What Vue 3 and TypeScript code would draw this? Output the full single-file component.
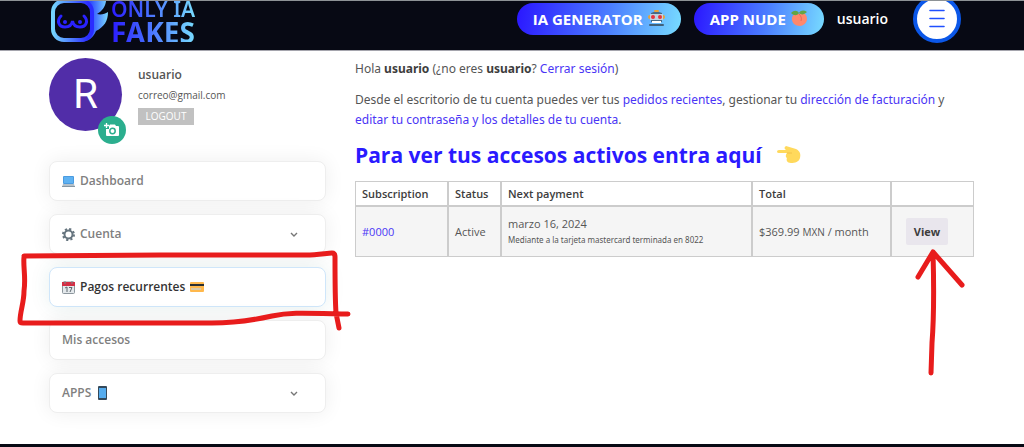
<script setup lang="ts">
interface MenuItem {
  label: string
  icon?: string
  trailing?: string
  expandable?: boolean
  active?: boolean
}

interface Subscription {
  id: string
  status: string
  next: string
  method: string
  amount: string
  currency: string
  period: string
}

const menu: MenuItem[] = [
  { label: 'Dashboard', icon: 'laptop' },
  { label: 'Cuenta', icon: 'gear', expandable: true },
  { label: 'Pagos recurrentes', icon: 'calendar', trailing: 'card', active: true },
  { label: 'Mis accesos' },
  { label: 'APPS', trailing: 'phone', expandable: true },
]

const subscriptions: Subscription[] = [
  {
    id: '#0000',
    status: 'Active',
    next: 'marzo 16, 2024',
    method: 'Mediante a la tarjeta mastercard terminada en 8022',
    amount: '$369.99',
    currency: 'MXN',
    period: '/ month',
  },
]
</script>

<template>
  <div class="page">
    <header class="topbar">
      <a class="brand" href="#">
        <svg class="brand-mark" width="60" height="56" viewBox="0 0 60 56" aria-hidden="true">
          <defs>
            <linearGradient id="markRing" x1="0" x2="1" y1="0" y2="0">
              <stop offset="0" stop-color="#74d4ff" />
              <stop offset="0.9" stop-color="#2a2cff" />
            </linearGradient>
            <linearGradient id="markFlame" x1="0" x2="1" y1="0" y2="0">
              <stop offset="0" stop-color="#2a22ff" />
              <stop offset="0.4" stop-color="#3050ff" />
              <stop offset="1" stop-color="#7ad9ff" />
            </linearGradient>
          </defs>
          <path d="M32 8 L58 6 C59 15 56 21 49 25 C53 26 57 25 60 23 C60 32 56 38 48 42 C45 49 41 52 34 53 Z" fill="url(#markFlame)" />
          <rect x="5" y="12" width="39" height="39" rx="11" fill="#070914" stroke="url(#markRing)" stroke-width="4" />
          <path d="M13 27 C8 32 11 38 17 38 C22 38 24 35 24.500 32 C25 35 27 38 32 38 C38 38 41 32 36 27" fill="none" stroke="#2a22ff" stroke-width="3" stroke-linecap="round" />
          <circle cx="17" cy="33" r="2" fill="#2a22ff" />
          <circle cx="32" cy="33" r="2" fill="#2a22ff" />
        </svg>
        <span class="brand-text">
          <span class="brand-top">ONLY IA</span>
          <span class="brand-bottom">FAKES</span>
        </span>
      </a>
      <nav class="topnav">
        <a class="pill" href="#">
          IA GENERATOR
          <svg width="17" height="17" viewBox="0 0 17 17" aria-hidden="true">
            <rect x="0" y="5" width="17" height="4" rx="2" fill="#e8a23a" />
            <path d="M3 3 Q8 0 14 3 V12 H3Z" fill="#486b86" />
            <rect x="6" y="0" width="5" height="2" rx="1" fill="#e8a23a" />
            <rect x="2" y="4" width="13" height="6" fill="#bed2df" />
            <circle cx="5" cy="7" r="2" fill="#e8333c" />
            <circle cx="12" cy="7" r="2" fill="#e8333c" />
            <rect x="4" y="11" width="9" height="2" fill="#fff" />
            <rect x="1" y="14" width="15" height="2" rx="1" fill="#40617b" />
          </svg>
        </a>
        <a class="pill" href="#">
          APP NUDE
          <svg width="17" height="17" viewBox="0 0 17 17" aria-hidden="true">
            <path d="M8 4 C13 1 16 5 16 9 C16 13 12 16 9 16 C4 16 1 13 1 9 C1 5 4 3 8 4Z" fill="#ff886c" />
            <path d="M8 4 C10 6 11 8 10 11" fill="none" stroke="#e7685a" />
            <path d="M0 3 C3 0 6 0 8 3 C10 0 13 0 16 2 C13 5 10 5 8 3 C6 6 3 6 0 3Z" fill="#63a545" />
          </svg>
        </a>
        <a class="user" href="#">usuario</a>
        <button class="burger" type="button" aria-label="Menú">
          <svg width="16" height="19" viewBox="0 0 16 19" aria-hidden="true">
            <path d="M1 1.5H15M1 9.5H15M1 17.5H15" stroke="#1f4fff" stroke-width="1.6" stroke-linecap="round" />
          </svg>
        </button>
      </nav>
    </header>

    <div class="content">
      <aside class="sidebar">
        <div class="profile">
          <div class="avatar">
            <span>R</span>
            <button class="camera" type="button" aria-label="Cambiar foto">
              <svg width="16" height="14" viewBox="0 0 16 14" aria-hidden="true">
                <path d="M5 3 L6 1.500H11L12 3H14Q15 3 15 4V12Q15 13 14 13H3Q2 13 2 12V6H5Z" fill="#fff" />
                <circle cx="8.500" cy="8" r="2.700" fill="#fff" stroke="#2bae8e" stroke-width="1.500" />
                <path d="M2.500 0V5M0 2.500H5" stroke="#fff" stroke-width="1.300" />
              </svg>
            </button>
          </div>
          <div class="identity">
            <strong>usuario</strong>
            <span class="mail">correo@gmail.com</span>
            <button class="logout" type="button">LOGOUT</button>
          </div>
        </div>

        <ul class="menu">
          <li v-for="item in menu" :key="item.label">
            <a class="menu-item" :class="{ active: item.active }" href="#">
              <svg v-if="item.icon === 'laptop'" width="13" height="13" viewBox="0 0 13 13" aria-hidden="true">
                <rect x="1" y="1" width="11" height="8" rx="1" fill="#4a9be0" />
                <rect x="2" y="2" width="9" height="6" fill="#5fb2f2" />
                <path d="M1 9H12L13 12H0Z" fill="#b4c0c9" />
                <path d="M0 11H13V12H0Z" fill="#8797a3" />
              </svg>
              <svg v-else-if="item.icon === 'gear'" width="13" height="13" viewBox="0 0 13 13" aria-hidden="true">
                <circle cx="6.500" cy="6.500" r="5.500" fill="none" stroke="#66757f" stroke-width="2" stroke-dasharray="2.160 2.160" />
                <circle cx="6.500" cy="6.500" r="4" fill="none" stroke="#66757f" stroke-width="2" />
              </svg>
              <svg v-else-if="item.icon === 'calendar'" width="13" height="13" viewBox="0 0 13 13" aria-hidden="true">
                <rect x="0.500" y="1" width="12" height="11.500" rx="1" fill="#e3e8eb" stroke="#8c969d" />
                <path d="M0 1H13V5H0Z" fill="#d32e44" />
                <path d="M3 0V3M10 0V3" stroke="#7e858b" />
                <path d="M3 7L5 6V11M7 6.500H10L8 11" fill="none" stroke="#5d676e" />
              </svg>
              <span>{{ item.label }}</span>
              <svg v-if="item.trailing === 'card'" width="14" height="10" viewBox="0 0 14 10" aria-hidden="true">
                <rect width="14" height="10" rx="1" fill="#ffb84c" />
                <rect y="2" width="14" height="2" fill="#292f33" />
                <rect x="1" y="6" width="10" height="2" fill="#d8c8a7" />
              </svg>
              <svg v-else-if="item.trailing === 'phone'" class="phone" width="9" height="14" viewBox="0 0 9 14" aria-hidden="true">
                <rect width="9" height="14" rx="1" fill="#34495a" />
                <rect x="1" y="2" width="7" height="10" fill="#55acee" />
              </svg>
              <svg v-if="item.expandable" class="chevron" width="8" height="5" viewBox="0 0 8 5" aria-hidden="true">
                <path d="M1 1L4 4L7 1" fill="none" stroke="#777" stroke-width="1.400" />
              </svg>
            </a>
            <svg v-if="item.active" class="mark-box" width="334" height="84" viewBox="0 0 334 84" aria-hidden="true">
              <path d="M7 8 C6 18 9 28 7 42 C7 54 3 62 3 72 Q3 74 6 74 L195 74 C221 74 237 71 255 67 C273 63 287 64 331 65 M7 7 L144 6 H289 C301 6 310 4 315 4 Q318 4 318 8 C318 28 318 50 319 64 L322 79" />
            </svg>
          </li>
        </ul>
      </aside>

      <main class="main">
        <p>Hola <strong>usuario</strong> (¿no eres <strong>usuario</strong>? <a href="#">Cerrar sesión</a>)</p>
        <p>
          Desde el escritorio de tu cuenta puedes ver tus <a href="#">pedidos recientes</a>, gestionar tu
          <a href="#">dirección de facturación</a> y <a href="#">editar tu contraseña y los detalles de tu cuenta</a>.
        </p>
        <h2>
          <a href="#">Para ver tus accesos activos entra aquí</a>
          <svg width="24" height="18" viewBox="0 0 24 18" aria-hidden="true">
            <path d="M2 4 H9 C7 3 7 1 9 0 L19 3 C23 5 24 8 23 12 C22 16 18 17 14 17 C10 17 9 14 10 12 C8 11 9 8 10 7 H2 Q0 7 0 5.500 Q0 4 2 4Z" fill="#ffd95c" />
            <path d="M10 7H15" stroke="#f0bd47" stroke-width="0.800" />
          </svg>
        </h2>

        <table>
          <colgroup>
            <col class="c-id"><col class="c-status"><col class="c-next"><col class="c-total"><col class="c-action">
          </colgroup>
          <thead>
            <tr>
              <th scope="col">Subscription</th>
              <th scope="col">Status</th>
              <th scope="col">Next payment</th>
              <th scope="col">Total</th>
              <td></td>
            </tr>
          </thead>
          <tbody>
            <tr v-for="s in subscriptions" :key="s.id">
              <td><a href="#">{{ s.id }}</a></td>
              <td>{{ s.status }}</td>
              <td>{{ s.next }}<small>{{ s.method }}</small></td>
              <td>{{ s.amount }} <span class="currency">{{ s.currency }}</span> {{ s.period }}</td>
              <td class="action">
                <div class="view-wrap">
                  <button class="view" type="button">View</button>
                  <svg class="mark-arrow" width="54" height="132" viewBox="0 0 54 132" aria-hidden="true">
                    <path d="M6 30 L21 5 L50 38 M21 5 C22 40 22 70 20 96 L19 126" />
                  </svg>
                </div>
              </td>
            </tr>
          </tbody>
        </table>
      </main>
    </div>
    <footer class="footer"></footer>
  </div>
</template>

<style>
body {
  background: #fff;
}
</style>

<style scoped>
.page {
  display: flex;
  flex-direction: column;
  min-height: 100vh;
  overflow: hidden;
  font-family: "Open Sans", "Noto Sans", sans-serif;
  font-size: 12px;
  line-height: 20px;
  color: #555;
}
.page * {
  box-sizing: border-box;
}
a {
  color: #4a35f5;
  text-decoration: none;
}
button {
  padding: 0;
  border: 0;
  font: inherit;
  cursor: pointer;
}
.topbar {
  display: flex;
  align-items: center;
  justify-content: space-between;
  height: 51px;
  padding: 0 63px 14px 48px;
  border-top: 1px solid #8d9296;
  border-bottom: 1px solid #a5a5ad;
  background: #070914;
  overflow: hidden;
}
.brand {
  display: flex;
  align-items: center;
  gap: 3px;
}
.brand-mark {
  margin-bottom: 4px;
}
.brand-text {
  display: flex;
  flex-direction: column;
  font-family: "Noto Sans", sans-serif;
  font-weight: 600;
}
.brand-top,
.brand-bottom {
  background: linear-gradient(90deg, #2a1aff, #3f5cff 35%, #78dcff);
  background-clip: text;
  color: transparent;
}
.brand-top {
  font-size: 21px;
  line-height: 26px;
}
.brand-bottom {
  font-size: 28px;
  font-weight: 700;
  line-height: 20px;
}
.topnav {
  display: flex;
  align-items: center;
  gap: 13px;
}
.pill {
  display: flex;
  align-items: center;
  gap: 5px;
  height: 32px;
  padding: 0 16px;
  border-radius: 16px;
  background: linear-gradient(100deg, #2a16ff, #4a7cff 55%, #78dcff);
  color: #fff;
  font-size: 15px;
  font-weight: 700;
  white-space: nowrap;
}
.user {
  color: #fff;
  font-size: 14px;
  font-weight: 600;
}
.burger {
  display: flex;
  align-items: center;
  justify-content: center;
  width: 48px;
  height: 48px;
  margin-left: 12px;
  border: 4px solid #0b57e8;
  border-radius: 50%;
  background: #fff;
}
.content {
  display: grid;
  grid-template-columns: 277px 1fr;
  gap: 29px;
  flex: 1;
  padding: 7px 50px 0 49px;
}
.profile {
  display: flex;
  gap: 16px;
}
.avatar {
  position: relative;
  display: flex;
  align-items: center;
  justify-content: center;
  width: 73px;
  height: 73px;
  border-radius: 50%;
  background: #512da8;
  color: #fff;
  font-family: Roboto, sans-serif;
  font-size: 40px;
}
.camera {
  position: absolute;
  right: -4px;
  bottom: -13px;
  display: flex;
  align-items: center;
  justify-content: center;
  width: 28px;
  height: 28px;
  border-radius: 50%;
  background: #2bae8e;
}
.identity {
  display: flex;
  flex-direction: column;
  align-items: flex-start;
  padding-top: 7px;
}
.identity strong {
  font-weight: 600;
  line-height: 20px;
}
.mail {
  font-size: 10px;
  line-height: 20px;
}
.logout {
  width: 56px;
  height: 17px;
  margin-top: 3px;
  background: #c1c1c1;
  color: #fff;
  font-size: 10px;
  line-height: 17px;
}
.menu {
  display: flex;
  flex-direction: column;
  gap: 13px;
  margin: 30px 0 0;
  padding: 0;
  list-style: none;
}
.menu li {
  position: relative;
}
.menu-item {
  display: flex;
  align-items: center;
  gap: 5px;
  height: 40px;
  padding: 0 27px 0 12px;
  border: 1px solid #eee;
  border-radius: 8px;
  background: #fff;
  box-shadow: 0 0 20px rgb(0 0 0 / 7%);
  color: #808080;
  font-weight: 600;
}
.menu-item.active {
  border-color: #cfe6fa;
  box-shadow: 0 0 20px rgb(0 110 100 / 10%);
  color: #333;
}
.phone {
  margin-left: 2px;
}
.chevron {
  margin-left: auto;
}
.mark-box,
.mark-arrow {
  position: absolute;
  z-index: 2;
  overflow: visible;
  pointer-events: none;
  fill: none;
  stroke: #e81c1c;
  stroke-width: 5;
  stroke-linecap: round;
  stroke-linejoin: round;
}
.mark-box {
  top: -18px;
  left: -32px;
}
.main {
  min-width: 0;
}
.main p {
  margin: 0 0 11px;
  font-family: "Noto Sans", "Open Sans", sans-serif;
}
.main p:first-child {
  padding-top: 1px;
}
.main strong {
  color: #3d3d3d;
}
.main h2 {
  display: flex;
  align-items: center;
  gap: 15px;
  margin: 0;
  font-size: 21px;
  line-height: 28px;
}
.main h2 a {
  color: #2a1aff;
}
table {
  width: 100%;
  margin-top: 12px;
  border: 0;
  border-collapse: separate;
  border-spacing: 0;
  table-layout: fixed;
  font-size: 11px;
  line-height: 16px;
}
th,
td {
  padding: 0 6px;
  border: 1px solid #ccc;
  text-align: left;
}
th {
  height: 25px;
  color: #3d3d3d;
  font-weight: 600;
}
tbody td {
  height: 51px;
  background: #f5f5f5;
}
.c-id {
  width: 93px;
}
.c-status {
  width: 53px;
}
.c-next {
  width: 251px;
}
.c-total {
  width: 139px;
}
.c-action {
  width: 83px;
}
small {
  display: block;
  font-family: "Noto Sans", "Open Sans", sans-serif;
  font-size: 8px;
}
.currency {
  font-size: 10px;
}
.action {
  padding: 0 14px;
}
.view-wrap {
  position: relative;
  width: 42px;
}
.view {
  width: 42px;
  height: 27px;
  border-radius: 2px;
  background: #e9e6ed;
  color: #3d3d3d;
  font-weight: 700;
}
.mark-arrow {
  top: 29px;
  left: 6px;
}
.footer {
  height: 3px;
  background: #070914;
}
</style>
